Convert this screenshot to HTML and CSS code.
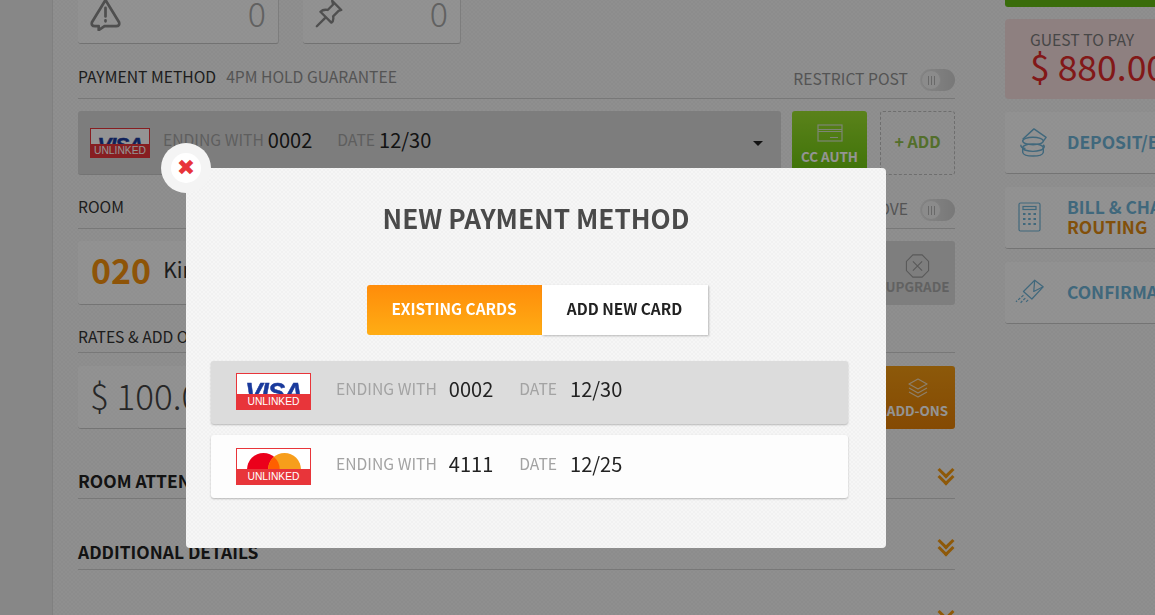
FILE: index.html

```html
<!DOCTYPE html>
<html lang="en">
<head>
  <meta charset="UTF-8">
  <title>New Payment Method</title>
  <meta name="viewport" content="width=device-width, initial-scale=1">
  <link rel="stylesheet" href="styles.css">
</head>
<body>
  <div class="page">
    <aside class="rail"></aside>

    <main class="main">
      <div class="stats">
        <div class="stat stat-wide">
          <svg class="stat-icon" viewBox="0 0 32 32" fill="none" stroke="#888" stroke-width="2.8" stroke-linejoin="round" stroke-linecap="round">
            <path d="M16 0 L30 23 Q31 27 27 27 L15 27 L9 31 L9 27 L5 27 Q1 27 2 23 Z"/>
            <path d="M16 8 V17 M16 21 V22"/>
          </svg>
          <span class="stat-num">0</span>
        </div>
        <div class="stat stat-narrow">
          <svg class="stat-icon stat-icon-pin" viewBox="0 0 32 32" fill="none" stroke="#888" stroke-width="2.6" stroke-linejoin="round" stroke-linecap="round">
            <path d="M19 1 L29 11 L26 12 L20 18 Q21 23 18 25 L6 13 Q9 10 14 11 L20 5 Z"/>
            <path d="M11 20 L2 29"/>
          </svg>
          <span class="stat-num">0</span>
        </div>
      </div>

      <div class="label-row">
        <div><span class="label-text">PAYMENT METHOD</span><span class="label-sub">4PM HOLD GUARANTEE</span></div>
        <div class="toggle-wrap"><span class="label-sub">RESTRICT POST</span><span class="toggle"><i></i></span></div>
      </div>
      <div class="field-row">
        <div class="field field-select">
          <span class="logo logo-small"><b class="visa">VISA</b><em>UNLINKED</em></span>
          <span class="muted">ENDING WITH</span><span class="num">0002</span>
          <span class="muted muted-date">DATE</span><span class="num">12/30</span>
          <span class="caret"></span>
        </div>
        <button class="tile tile-green">
          <svg width="26" height="18" viewBox="0 0 26 18" fill="none" stroke="#d8e6c8" stroke-width="1.2"><rect x="1" y="1" width="24" height="16"/><path d="M1 5.5 H25 M1 7.5 H25 M13 13.5 H21"/></svg>
          CC AUTH
        </button>
        <button class="tile tile-dashed">+ ADD</button>
      </div>

      <div class="label-row label-row-room">
        <span class="label-text">ROOM</span>
        <div class="toggle-wrap"><span class="label-sub">MOVE</span><span class="toggle"><i></i></span></div>
      </div>
      <div class="field-row">
        <div class="field field-room">
          <span class="room-num">020</span><span class="room-name">King</span>
        </div>
        <button class="tile tile-grey">
          <svg width="25" height="24" viewBox="0 0 26 26" fill="none" stroke="#9a9a9a" stroke-width="1.2"><path d="M8 1 H18 L25 8 V18 L18 25 H8 L1 18 V8 Z"/><path d="M8 8 L18 18 M18 8 L8 18"/></svg>
          UPGRADE
        </button>
      </div>

      <div class="label-row label-row-rates">
        <span class="label-text">RATES &amp; ADD ONS</span>
      </div>
      <div class="field-row field-row-rates">
        <div class="field field-rate"><span class="rate-num">$ 100.00</span></div>
        <button class="tile tile-orange">
          <svg width="20" height="21" viewBox="0 0 20 21" fill="none" stroke="#f3dcb8" stroke-width="1.2" stroke-linejoin="round"><path d="M10 1 L19 6 L10 11 L1 6 Z"/><path d="M1 10 L10 15 L19 10 M1 14 L10 19 L19 14"/></svg>
          ADD-ONS
        </button>
      </div>

      <div class="section section-first"><strong>ROOM ATTENDANT</strong><span class="chev"></span></div>
      <div class="section"><strong>ADDITIONAL DETAILS</strong><span class="chev"></span></div>
      <div class="section section-last"><span class="chev"></span></div>
    </main>

    <aside class="side">
      <div class="side-top"></div>
      <div class="pay-box">
        <span class="pay-label">GUEST TO PAY</span>
        <span class="pay-amount">$ 880.00</span>
      </div>
      <div class="side-card">
        <span class="side-ico">
          <svg class="ico-deposit" width="30" height="30" viewBox="0 0 32 32" fill="none" stroke="#6fb3d6" stroke-width="1.5" stroke-linejoin="round">
            <path d="M5 13 L17 2 L30 11 L27 15"/>
            <ellipse cx="16" cy="15" rx="11" ry="4"/>
            <path d="M3 19 Q3 23 8 23 M27 19 Q29 21 27 23"/>
            <ellipse cx="16" cy="22" rx="11" ry="4"/>
            <path d="M5 22 V27 Q6 31 16 31 Q26 31 27 27 V22"/>
          </svg>
        </span>
        <span class="side-text">DEPOSIT/BALANCE</span>
      </div>
      <div class="side-card">
        <span class="side-ico">
          <svg class="ico-calc" width="23" height="30" viewBox="0 0 23 30" fill="none" stroke="#6fb3d6" stroke-width="1.2"><rect x="1" y="1" width="21" height="28" rx="1.5"/><rect x="5" y="4.5" width="13" height="3"/><path d="M5 12 H7.5 M10.2 12 H12.7 M15.5 12 H18 M5 17 H7.5 M10.2 17 H12.7 M15.5 17 H18 M5 22 H7.5 M10.2 22 H12.7 M15.5 22 H18" stroke-width="2"/></svg>
        </span>
        <span class="side-text">BILL &amp; CHARGES<br><span class="side-orange">ROUTING</span></span>
      </div>
      <div class="side-card">
        <span class="side-ico">
          <svg width="30" height="25" viewBox="0 0 32 26" fill="none" stroke="#6fb3d6" stroke-width="1.3" stroke-linejoin="round"><path d="M9 13 L21 1 L30 8 L18 21 Z"/><path d="M21 1 L20 13 L30 8"/><path d="M9 17 L1 24 M11 20 L6 25 M14 22 L11 25" stroke-dasharray="3 1.5"/></svg>
        </span>
        <span class="side-text">CONFIRMATION</span>
      </div>
    </aside>
  </div>

  <div class="overlay"></div>

  <div class="modal">
    <span class="close"><span class="close-inner">&#10006;</span></span>
    <h2 class="modal-title">NEW PAYMENT METHOD</h2>
    <div class="tabs">
      <button class="tab tab-on">EXISTING CARDS</button>
      <button class="tab">ADD NEW CARD</button>
    </div>
    <div class="card-row card-row-on">
      <span class="logo"><b class="visa">VISA</b><em>UNLINKED</em></span>
      <span class="muted">ENDING WITH</span><span class="num">0002</span>
      <span class="muted muted-date">DATE</span><span class="num">12/30</span>
    </div>
    <div class="card-row">
      <span class="logo">
        <svg class="mc" width="54" height="33" viewBox="0 0 54 33"><circle cx="16.5" cy="16.5" r="16.5" fill="#eb001b"/><circle cx="37.5" cy="16.5" r="16.5" fill="#f79e1b"/><path d="M27 4 A16.5 16.5 0 0 1 27 29 A16.5 16.5 0 0 1 27 4 Z" fill="#ff5f00"/></svg>
        <em>UNLINKED</em>
      </span>
      <span class="muted">ENDING WITH</span><span class="num">4111</span>
      <span class="muted muted-date">DATE</span><span class="num">12/25</span>
    </div>
  </div>
</body>
</html>
```

FILE: styles.css

```css
* { box-sizing: border-box; }

html, body {
  margin: 0;
  height: 615px;
  overflow: hidden;
}

body {
  font-family: "Noto Sans CJK SC", "Noto Sans", sans-serif;
  color: #222;
  background-color: #f6f6f6;
  background-image: radial-gradient(rgba(0,0,0,.02) 1px, transparent 1px), radial-gradient(rgba(0,0,0,.02) 1px, transparent 1px);
  background-size: 4px 4px;
  background-position: 0 0, 2px 2px;
}

button {
  font-family: inherit;
  cursor: pointer;
}

.page {
  display: flex;
  height: 615px;
}

.rail {
  width: 53px;
  flex: none;
  background: #e8e8e8;
  border-right: 1px solid #dcdcdc;
}

.main {
  width: 902px;
  flex: none;
  padding-left: 25px;
}

/* top counters, scrolled partly out of view */
.stats {
  display: flex;
  gap: 24px;
  height: 44px;
}
.stat {
  display: flex;
  justify-content: space-between;
  padding: 0 12px;
  background: rgba(255,255,255,.55);
  border-bottom: 1px solid #c4c4c4;
  border-right: 1px solid #d8d8d8;
  border-radius: 0 0 3px 3px;
}
.stat-wide { width: 201px; }
.stat-narrow { width: 158px; }
.stat-icon {
  width: 31px;
  height: 31px;
}
.stat-icon-pin {
  width: 29px;
  height: 29px;
}
.stat-num {
  font-size: 34px;
  font-weight: 300;
  line-height: 25px;
  color: #a8a8a8;
}

.label-row {
  display: flex;
  justify-content: space-between;
  align-items: flex-end;
  height: 55px;
  padding-bottom: 10px;
  border-bottom: 1px solid #cfcfcf;
  font-size: 15.7px;
  line-height: 22px;
}
.label-row-room { height: 54px; }
.label-row-rates { height: 48px; padding-bottom: 4px; }
.label-text { color: #333; }
.label-sub {
  margin-left: 10px;
  color: #929292;
}

.toggle-wrap {
  display: flex;
  align-items: center;
  gap: 12px;
  margin-bottom: -4px;
}
.toggle-wrap .label-sub { margin-bottom: 2px; }
.toggle {
  display: flex;
  width: 35px;
  height: 22px;
  background: linear-gradient(90deg, #e6e6e6, #cfcfcf);
  border-radius: 11px;
}
.toggle i {
  width: 20px;
  height: 20px;
  margin: 1px;
  background: repeating-linear-gradient(90deg, #b5b5b5 0 1px, transparent 1px 3px) center / 7px 9px no-repeat, #f0f0f0;
  border: 1px solid #ddd;
  border-radius: 50%;
}

.field-row {
  display: flex;
  gap: 11px;
  height: 64px;
  margin-top: 12px;
}
.field-row-rates { margin-top: 13px; height: 63px; }

.field {
  display: flex;
  align-items: center;
  flex: 1;
  background: rgba(255,255,255,.55);
  border-bottom: 1px solid #c8c8c8;
  border-radius: 3px;
}
.field-select {
  position: relative;
  padding-left: 12px;
  background: #d8d8d8;
}
.field-select .muted { margin-left: 13px; }
.field-select .num { margin-left: 4px; }
.field-select .muted-date { margin-left: 25px; }
.caret {
  position: absolute;
  right: 18px;
  top: 30px;
  border: 5px solid transparent;
  border-top-color: #222;
  border-bottom: 0;
}

.field-room {
  padding: 0 0 7px 13px;
}
.room-num {
  color: #f5920f;
  font-size: 34px;
  font-weight: 700;
}
.room-name {
  margin-left: 12px;
  font-size: 21px;
  color: #333;
}
.field-rate {
  padding: 0 0 6px 12px;
}
.rate-num {
  font-size: 35px;
  font-weight: 300;
  color: #444;
}

.tile {
  display: flex;
  flex-direction: column;
  align-items: center;
  gap: 4px;
  width: 75px;
  flex: none;
  padding: 13px 0 0;
  border: 0;
  border-radius: 3px;
  font-size: 13.4px;
  font-weight: 700;
  line-height: 20px;
  white-space: nowrap;
}
.tile-green {
  background: linear-gradient(#9ce02e, #6cc60f);
  color: #fff;
}
.tile-dashed {
  justify-content: center;
  margin-left: 2px;
  padding: 0 0 4px;
  background: transparent;
  border: 1px dashed #bdbdbd;
  color: #8fbf4a;
  font-size: 16px;
}
.tile-grey {
  gap: 0;
  background: #d9d9d9;
  color: #a8a8a8;
  line-height: 16px;
}
.tile-orange {
  padding-top: 12px;
  gap: 1px;
  background: linear-gradient(#f29a12, #e57f05);
  color: #fff;
}

.section {
  display: flex;
  justify-content: space-between;
  height: 71px;
  padding: 39px 0 2px;
  border-bottom: 1px solid #cfcfcf;
  font-size: 17.4px;
  line-height: 28px;
  color: #222;
}
.section strong { font-weight: 700; }
.section .chev { margin-top: -2px; }
.section-first {
  height: 70px;
  padding-top: 38px;
}
.section-last {
  justify-content: flex-end;
  border-bottom: 0;
}
.chev {
  position: relative;
  width: 16px;
  height: 18px;
  margin-right: 2px;
}
.chev::before, .chev::after {
  content: "";
  position: absolute;
  left: 3px;
  width: 9px;
  height: 9px;
  border-right: 3px solid #f59a10;
  border-bottom: 3px solid #f59a10;
  transform: rotate(45deg);
}
.chev::before { top: -1px; }
.chev::after { top: 6px; }

.side {
  width: 200px;
  margin-left: 50px;
  flex: none;
}
.side-top {
  height: 7px;
  background: #62bb12;
  border-radius: 0 0 3px 3px;
}
.pay-box {
  display: flex;
  flex-direction: column;
  height: 80px;
  margin-top: 12px;
  padding: 10px 0 0 25px;
  background: #f5dcdc;
  border-radius: 4px;
  white-space: nowrap;
}
.pay-label {
  font-size: 15.7px;
  line-height: 22px;
  color: #7a7a7a;
}
.pay-amount {
  font-size: 35.5px;
  line-height: 30px;
  color: #e02a2a;
}
.side-card {
  display: flex;
  align-items: center;
  height: 62px;
  margin-top: 13px;
  padding: 0 0 2px 10px;
  background: rgba(255,255,255,.55);
  border-bottom: 1px solid #c8c8c8;
  border-radius: 3px;
  white-space: nowrap;
}
.side-ico {
  display: flex;
  width: 52px;
  flex: none;
}
.ico-deposit, .ico-calc { margin-left: 3px; }
.side-text {
  font-size: 17.4px;
  font-weight: 700;
  line-height: 20px;
  color: #6fb3d6;
}
.side-orange { color: #e08a12; }

.overlay {
  position: fixed;
  inset: 0;
  background: rgba(0,0,0,.42);
}

.modal {
  position: fixed;
  left: 186px;
  top: 168px;
  width: 700px;
  height: 380px;
  padding: 32px 38px 0 25px;
  background-color: #f6f6f6;
  background-image: radial-gradient(rgba(0,0,0,.02) 1px, transparent 1px), radial-gradient(rgba(0,0,0,.02) 1px, transparent 1px);
  background-size: 4px 4px;
  background-position: 0 0, 2px 2px;
  border-radius: 4px;
}
.close {
  position: absolute;
  left: -25px;
  top: -25px;
  display: flex;
  align-items: center;
  justify-content: center;
  width: 50px;
  height: 50px;
  background: #f4f4f4;
  border-radius: 50%;
}
.close-inner {
  display: flex;
  align-items: center;
  justify-content: center;
  width: 30px;
  height: 30px;
  background: #fff;
  border-radius: 50%;
  color: #e8333a;
  font-family: "DejaVu Sans", sans-serif;
  font-size: 22px;
  line-height: 1;
}
.modal-title {
  margin: 0;
  padding-left: 13px;
  text-align: center;
  font-size: 26.2px;
  font-weight: 700;
  line-height: 36px;
  color: #4a4a4a;
}

.tabs {
  display: flex;
  justify-content: center;
  margin: 49px 0 26px 15px;
}
.tab {
  width: 166px;
  height: 50px;
  padding: 0 0 5px;
  background: #fff;
  border: 0;
  box-shadow: 1px 1px 2px rgba(0,0,0,.25);
  font-size: 15.4px;
  font-weight: 700;
  color: #222;
}
.tab-on {
  width: 175px;
  background: linear-gradient(#ff8c0a, #ffad14);
  border-radius: 3px 0 0 3px;
  color: #fff;
  box-shadow: none;
}

.card-row {
  display: flex;
  align-items: center;
  height: 63px;
  margin-bottom: 11px;
  padding-left: 25px;
  background: #fdfdfd;
  border-radius: 3px;
  box-shadow: 0 1px 2px rgba(0,0,0,.25);
}
.card-row-on {
  padding-bottom: 2px;
  background: #dcdcdc;
}

.logo {
  position: relative;
  display: block;
  flex: none;
  width: 75px;
  height: 37px;
  overflow: hidden;
  background: #fff;
  border: 1px solid #e8353a;
  text-align: center;
}
.logo-small {
  width: 60px;
  height: 30px;
}
.logo em {
  position: absolute;
  left: -1px;
  right: -1px;
  bottom: -1px;
  height: 16px;
  background: #e8353a;
  color: #fff;
  font-family: "Liberation Sans", Arial, sans-serif;
  font-size: 10.3px;
  font-style: normal;
  line-height: 16px;
}
.logo-small em {
  height: 14px;
  line-height: 14px;
}
.visa {
  display: block;
  margin-top: 3px;
  color: #1a3a9c;
  font-family: "Liberation Sans", Arial, sans-serif;
  font-size: 26px;
  font-style: italic;
  font-weight: 700;
  line-height: 30px;
  letter-spacing: -1px;
  -webkit-text-stroke: .5px #1a3a9c;
}
.logo-small .visa {
  margin-top: 3px;
  font-size: 21px;
  line-height: 26px;
}
.mc {
  position: absolute;
  left: 10px;
  top: 4px;
}

.muted {
  margin: 0 0 6px 25px;
  font-size: 15.7px;
  color: #a3a3a3;
}
.num {
  margin: 0 0 6px 12px;
  font-size: 20px;
  color: #222;
}
.muted-date { margin-left: 26px; }
.card-row .muted-date + .num { margin-left: 13px; }
```
